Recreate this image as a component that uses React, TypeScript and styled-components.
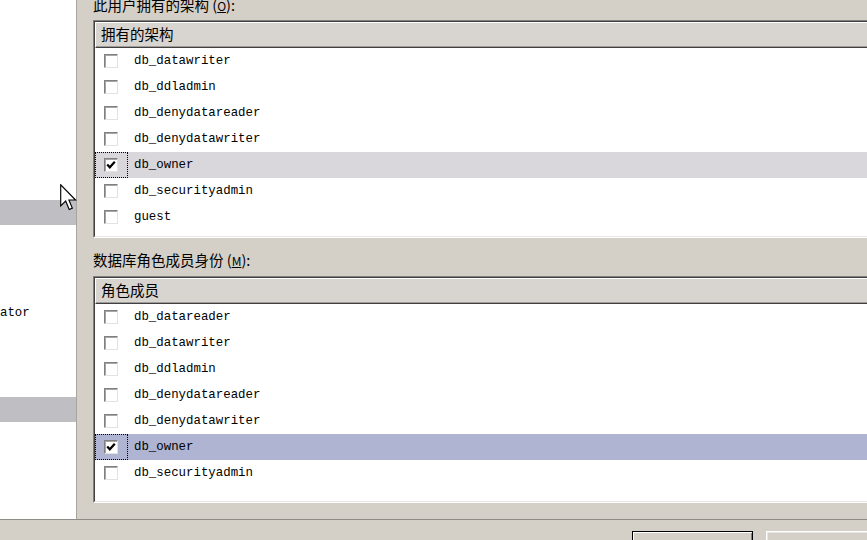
import React from "react";
import styled, { createGlobalStyle, css } from "styled-components";

const GlobalStyle = createGlobalStyle`
  html, body { margin: 0; padding: 0; background: #d4d0c8; overflow: hidden; }
  #root { width: 867px; height: 540px; }
  * { box-sizing: border-box; }
`;

const Frame = styled.div`
  position: relative;
  width: 867px;
  height: 540px;
  background: #d4d0c8;
  display: flex;
  flex-direction: column;
  overflow: hidden;
  font-family: "Noto Sans CJK SC", "Liberation Sans", sans-serif;
  color: #000;
`;

const Main = styled.div`
  flex: 0 0 520px;
  display: flex;
  border-bottom: 1px solid #8f8c88;
`;

const LeftPanel = styled.div`
  flex: 0 0 77px;
  background: #fff;
  border-right: 1px solid #a8a5a0;
  display: flex;
  flex-direction: column;
  padding-top: 200px;
  overflow: hidden;
`;

const NavBar = styled.div<{ $gap: number }>`
  height: 25px;
  margin-top: ${(p) => p.$gap}px;
  background: #bfbec3;
`;

const NavItem = styled.div`
  height: 20px;
  margin-top: 78px;
  line-height: 20px;
  font-family: "Liberation Mono", "DejaVu Sans Mono", monospace;
  font-size: 12.4px;
  white-space: nowrap;
`;

const RightArea = styled.div`
  flex: 1;
  min-width: 0;
  display: flex;
  flex-direction: column;
  padding-left: 16px;
  overflow: hidden;
`;

const SectionLabel = styled.div<{ $top: number }>`
  height: 20px;
  line-height: 20px;
  margin-top: ${(p) => p.$top}px;
  font-size: 14.5px;
  white-space: nowrap;
`;

const Hotkey = styled.span`
  text-decoration: underline;
  font-size: 12px;
`;

const ListFrame = styled.div<{ $h: number; $top: number }>`
  height: ${(p) => p.$h}px;
  margin-top: ${(p) => p.$top}px;
  width: calc(100% + 20px);
  border-top: 1px solid #808080;
  border-left: 1px solid #808080;
  border-bottom: 1px solid #fff;
  flex-shrink: 0;
`;

const ListInner = styled.div`
  height: 100%;
  background: #fff;
  border-top: 1px solid #404040;
  border-left: 1px solid #404040;
  border-bottom: 1px solid #e8e6e2;
  display: flex;
  flex-direction: column;
`;

const ListHeader = styled.div`
  height: 26px;
  flex-shrink: 0;
  background: #d8d4d0;
  border-top: 1px solid #fff;
  border-left: 1px solid #fff;
  border-bottom: 1px solid #404040;
  box-shadow: inset 0 -1px 0 #a09c98;
  padding-left: 5px;
  font-size: 14.5px;
  line-height: 22px;
  white-space: nowrap;
`;

const Row = styled.div<{ $tone?: "gray" | "blue" }>`
  height: 26px;
  flex-shrink: 0;
  display: flex;
  align-items: center;
  ${(p) =>
    p.$tone === "gray" &&
    css`
      background: #d9d7dc;
    `}
  ${(p) =>
    p.$tone === "blue" &&
    css`
      background: #aeb4d2;
    `}
`;

const CheckCell = styled.div<{ $focus?: boolean }>`
  width: 33px;
  height: 26px;
  flex-shrink: 0;
  display: flex;
  align-items: center;
  padding-left: 9px;
  ${(p) =>
    p.$focus &&
    css`
      outline: 1px dotted #000;
      outline-offset: -1px;
    `}
`;

const Box = styled.div`
  width: 14px;
  height: 14px;
  background: #fff;
  border-top: 1px solid #808080;
  border-left: 1px solid #808080;
  border-right: 1px solid #e4e2de;
  border-bottom: 1px solid #e4e2de;
  box-shadow: inset 1px 1px 0 #a8a6a2;
  display: flex;
  align-items: center;
  justify-content: center;
`;

const RowText = styled.span`
  padding-left: 6px;
  font-family: "Liberation Mono", "DejaVu Sans Mono", monospace;
  font-size: 12.4px;
  white-space: nowrap;
`;

const Footer = styled.div`
  flex: 1;
  display: flex;
  gap: 13px;
  padding: 11px 0 0 632px;
`;

const Button = styled.div<{ $default?: boolean }>`
  width: 121px;
  height: 24px;
  flex-shrink: 0;
  background: #d4d0c8;
  ${(p) =>
    p.$default
      ? css`
          border: 1px solid #000;
          box-shadow: inset 1px 1px 0 #fff, inset -1px -1px 0 #808080;
        `
      : css`
          border-top: 1px solid #fff;
          border-left: 1px solid #fff;
          border-right: 1px solid #404040;
          border-bottom: 1px solid #404040;
          box-shadow: inset 1px 1px 0 #e8e6e2;
        `}
`;

const Cursor = styled.svg`
  position: absolute;
  left: 60px;
  top: 184px;
`;

type Item = { name: string; checked?: boolean; tone?: "gray" | "blue" };

const schemas: Item[] = [
  { name: "db_datawriter" },
  { name: "db_ddladmin" },
  { name: "db_denydatareader" },
  { name: "db_denydatawriter" },
  { name: "db_owner", checked: true, tone: "gray" },
  { name: "db_securityadmin" },
  { name: "guest" },
];

const roles: Item[] = [
  { name: "db_datareader" },
  { name: "db_datawriter" },
  { name: "db_ddladmin" },
  { name: "db_denydatareader" },
  { name: "db_denydatawriter" },
  { name: "db_owner", checked: true, tone: "blue" },
  { name: "db_securityadmin" },
];

const Check = () => (
  <svg width="10" height="10" viewBox="0 0 10 10">
    <path d="M1.2 4.6 L3.8 7.3 L8.8 1.8" fill="none" stroke="#000" strokeWidth="2.2" />
  </svg>
);

const ListRows = ({ items }: { items: Item[] }) => (
  <>
    {items.map((it) => (
      <Row key={it.name} $tone={it.tone}>
        <CheckCell $focus={it.checked}>
          <Box>{it.checked && <Check />}</Box>
        </CheckCell>
        <RowText>{it.name}</RowText>
      </Row>
    ))}
  </>
);

export default function App() {
  return (
    <>
      <GlobalStyle />
      <Frame>
        <Main>
          <LeftPanel>
            <NavBar $gap={0} />
            <NavItem>ator</NavItem>
            <NavBar $gap={74} />
          </LeftPanel>
          <RightArea>
            <SectionLabel $top={-5}>
              此用户拥有的架构 (<Hotkey>O</Hotkey>):
            </SectionLabel>
            <ListFrame $h={218} $top={5}>
              <ListInner>
                <ListHeader>拥有的架构</ListHeader>
                <ListRows items={schemas} />
              </ListInner>
            </ListFrame>
            <SectionLabel $top={12}>
              数据库角色成员身份 (<Hotkey>M</Hotkey>):
            </SectionLabel>
            <ListFrame $h={227} $top={6}>
              <ListInner>
                <ListHeader>角色成员</ListHeader>
                <ListRows items={roles} />
              </ListInner>
            </ListFrame>
          </RightArea>
        </Main>
        <Footer>
          <Button $default />
          <Button />
        </Footer>
        <Cursor width="17" height="27" viewBox="0 0 12 19">
          <path
            d="M0.5 0.5 L0.5 15.5 L4 12 L6.5 18 L8.7 17 L6.3 11.3 L11 11.3 Z"
            fill="#fff"
            stroke="#000"
            strokeWidth="0.8"
            strokeLinejoin="miter"
          />
        </Cursor>
      </Frame>
    </>
  );
}
